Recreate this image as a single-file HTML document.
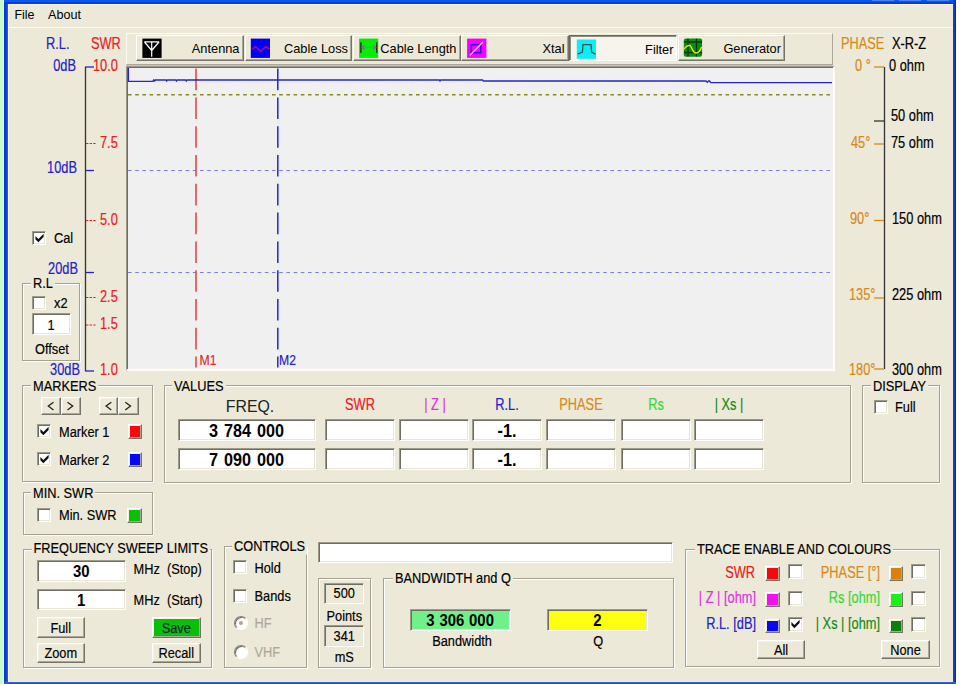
<!DOCTYPE html>
<html>
<head>
<meta charset="utf-8">
<title>Antenna Analyzer</title>
<style>
html,body{margin:0;padding:0;}
body{width:961px;height:684px;overflow:hidden;background:#ece9d8;position:relative;
 font-family:"Liberation Sans",sans-serif;font-size:12.8px;color:#000;}
.a{position:absolute;white-space:nowrap;line-height:14px;}
.t{position:absolute;white-space:nowrap;line-height:14px;height:14px;transform:scaleY(1.14);transform-origin:0 50%;-webkit-text-stroke:0.15px;}
.t.x{transform:scaleY(1.22);}
.t.gt{transform:scaleY(1.1);}
.r{text-align:right;}
.c{text-align:center;}
.blue{color:#2222c8;}
.red{color:#e82020;}
.org{color:#d88a18;}
.mag{color:#e030e0;}
.lgr{color:#38d838;}
.dgr{color:#168a16;}
.gry{color:#aca899;}
/* group box */
.gb{position:absolute;border:1px solid #a5a294;box-shadow:1px 1px 0 #fff, inset 1px 1px 0 #fff;box-sizing:border-box;}
.gt{position:absolute;background:#ece9d8;padding:0 2px;line-height:14px;height:14px;white-space:nowrap;}
/* sunken input */
.in{position:absolute;box-sizing:border-box;background:#fff;border:1px solid;border-color:#9d9a8c #fff #fff #9d9a8c;
 box-shadow:inset 1px 1px 0 #6f6d62, inset -1px -1px 0 #e8e5d6;text-align:center;font-weight:bold;white-space:nowrap;}
/* button */
.bt{position:absolute;box-sizing:border-box;background:#ece9d8;border:1px solid;border-color:#fff #75736a #75736a #fff;
 box-shadow:inset -1px -1px 0 #aaa798, inset 1px 1px 0 #f4f2e8;text-align:center;white-space:nowrap;}
/* checkbox */
.cb{position:absolute;box-sizing:border-box;width:14px;height:14px;background:#fff;border:1px solid;border-color:#9d9a8c #fff #fff #9d9a8c;
 box-shadow:inset 1px 1px 0 #6f6d62, inset -1px -1px 0 #e8e5d6;}
.sq{position:absolute;box-sizing:border-box;width:14.5px;height:14.5px;border:1px solid;border-color:#fff #75736a #75736a #fff;
 box-shadow:inset -1px -1px 0 #aaa798, inset 1px 1px 0 #f1efe2;}
.tb{position:absolute;top:35px;width:107.5px;height:26px;box-sizing:border-box;background:#ece9d8;border:1px solid;border-color:#fff #75736a #75736a #fff;
 box-shadow:inset -1px -1px 0 #aaa798;font-size:12.8px;line-height:26.4px;text-align:right;padding-right:3px;white-space:nowrap;}
.tb.dn{border-color:#6a685e #fff #fff #6a685e;box-shadow:inset 1px 1px 0 #8f8d7f;background:#f6f4ec;padding-right:2px;line-height:28.4px;}
.bv{font-size:16.2px;line-height:20px;word-spacing:1.5px;padding-top:1px;}
.bs{font-size:14.9px;line-height:19.5px;padding-top:1px;}
.bs b{display:block;transform:scaleY(1.12);transform-origin:50% 50%;}
.bv b{display:block;transform:scaleY(1.08);transform-origin:50% 50%;}
.rb{position:absolute;box-sizing:border-box;width:13.5px;height:13.5px;border-radius:50%;background:#fff;border:1px solid;border-color:#8a8878 #fff #fff #8a8878;box-shadow:inset 1px 1px 0 #6f6d62;}
.rb i{position:absolute;left:3.5px;top:3.5px;width:4.5px;height:4.5px;border-radius:50%;background:#aca899;}
.in.sm{background:#ece9d8;}
svg{position:absolute;left:0;top:0;}
svg.k{left:-1px;top:-1px;}
</style>
</head>
<body>
<!-- window frame -->
<div class="a" style="left:0;top:0;width:4px;height:684px;background:linear-gradient(90deg,#c6fbc8 0,#c8fccc 3px,#d8fff0 4px);"></div>
<div class="a" style="left:4px;top:0;width:4px;height:684px;background:linear-gradient(90deg,#0834d4 0,#0a3cdc 2px,#2462ec 4px);"></div>
<div class="a" style="left:4px;top:0;width:952px;height:4px;background:linear-gradient(180deg,#0a5cea 0,#0a56e8 1.5px,#0836dc 3px,#0a34d8 4px);"></div>
<div class="a" style="left:953px;top:0;width:3px;height:684px;background:linear-gradient(90deg,#1848d8 0,#0426b4 3px);"></div>
<div class="a" style="left:956px;top:0;width:5px;height:684px;background:#fff;"></div>
<div class="a" style="left:4px;top:682px;width:952px;height:2px;background:linear-gradient(180deg,#3c6ee0 0,#0c44d4 2px);"></div>
<div class="a" style="left:8px;top:4px;width:945px;height:1px;background:#fbfaf6;"></div>
<div class="a" style="left:8px;top:4px;width:1px;height:678px;background:#f8f7f0;"></div>
<div class="a" style="left:8px;top:27px;width:945px;height:1px;background:#fbfaf6;"></div>
<div class="a" style="left:872px;top:0;width:22px;height:1.3px;background:#4a84f4;"></div>
<div class="a" style="left:899px;top:0;width:22px;height:1.3px;background:#4a84f4;"></div>
<div class="a" style="left:927px;top:0;width:22px;height:1.3px;background:#4a84f4;"></div>
<!-- menu -->
<div class="a" style="left:14.5px;top:7.5px;font-size:12.4px;transform:scaleY(1.08);">File</div>
<div class="a" style="left:48px;top:7.5px;font-size:12.6px;transform:scaleY(1.08);">About</div>

<!-- left axis labels -->
<div class="t x blue" style="left:46px;top:37.2px;">R.L.</div>
<div class="t x red" style="left:91px;top:37.2px;">SWR</div>
<div class="t x blue r" style="left:30px;width:46px;top:59.2px;">0dB</div>
<div class="t x red" style="left:93px;top:59.2px;">10.0</div>
<div class="t x red" style="left:100px;top:136.2px;">7.5</div>
<div class="t x blue r" style="left:30px;width:47px;top:161.2px;">10dB</div>
<div class="t x red" style="left:100px;top:213.2px;">5.0</div>
<div class="t x blue r" style="left:30px;width:48px;top:262.2px;">20dB</div>
<div class="t x red" style="left:100px;top:290.2px;">2.5</div>
<div class="t x red" style="left:100px;top:317.2px;">1.5</div>
<div class="t x blue r" style="left:30px;width:50px;top:363.2px;">30dB</div>
<div class="t x red" style="left:100px;top:363.2px;">1.0</div>

<!-- right axis labels -->
<div class="t x org" style="left:841px;top:37.2px;">PHASE</div>
<div class="t x" style="left:892px;top:37.2px;">X-R-Z</div>
<div class="t x org" style="left:855px;top:59.2px;">0 °</div>
<div class="t x" style="left:889px;top:59.2px;">0 ohm</div>
<div class="t x" style="left:891px;top:109.2px;">50 ohm</div>
<div class="t x org" style="left:851px;top:136.2px;">45°</div>
<div class="t x" style="left:891px;top:136.2px;">75 ohm</div>
<div class="t x org" style="left:850px;top:212.2px;">90°</div>
<div class="t x" style="left:892px;top:212.2px;">150 ohm</div>
<div class="t x org" style="left:849px;top:288.2px;">135°</div>
<div class="t x" style="left:892px;top:288.2px;">225 ohm</div>
<div class="t x org" style="left:849px;top:363.2px;">180°</div>
<div class="t x" style="left:892px;top:363.2px;">300 ohm</div>

<!-- chart -->
<div class="a" style="left:125.5px;top:66px;width:709px;height:305px;box-sizing:border-box;background:#f0f0f0;border:solid;border-width:1px 2px 2px 1px;border-color:#9d9a8c #fdfcf8 #fdfcf8 #9d9a8c;box-shadow:inset 1px 1px 0 #6f6d62, inset -1px -1px 0 #f5f3ea;"></div>

<svg width="961" height="684" viewBox="0 0 961 684">
 <!-- left axis -->
 <line x1="85.5" y1="67" x2="85.5" y2="371" stroke="#333" stroke-width="1.3"/>
 <line x1="85" y1="67" x2="94" y2="67" stroke="#2222c8" stroke-width="1.3"/>
 <line x1="85" y1="170.5" x2="94" y2="170.5" stroke="#2222c8" stroke-width="1.3"/>
 <line x1="85" y1="272.5" x2="94" y2="272.5" stroke="#2222c8" stroke-width="1.3"/>
 <line x1="85" y1="371" x2="94" y2="371" stroke="#2222c8" stroke-width="1.3"/>
 <g stroke="#e82020" stroke-width="1.2" stroke-dasharray="2.4 1.2">
  <line x1="86" y1="143.5" x2="96" y2="143.5"/>
  <line x1="86" y1="220.5" x2="96" y2="220.5"/>
  <line x1="86" y1="297.5" x2="96" y2="297.5"/>
  <line x1="86" y1="325" x2="96" y2="325"/>
 </g>
 <!-- right axis -->
 <line x1="884.5" y1="67" x2="884.5" y2="369" stroke="#333" stroke-width="1.3"/>
 <g stroke="#d88a18" stroke-width="1.3">
  <line x1="874" y1="67" x2="884" y2="67"/>
  <line x1="874" y1="144" x2="884" y2="144"/>
  <line x1="874" y1="220.5" x2="884" y2="220.5"/>
  <line x1="874" y1="298" x2="884" y2="298"/>
  <line x1="874" y1="369" x2="884" y2="369"/>
 </g>
 <line x1="874" y1="121" x2="884" y2="121" stroke="#333" stroke-width="1.3"/>
 <!-- grid -->
 <line x1="128" y1="94.75" x2="832" y2="94.75" stroke="#8a8a1e" stroke-width="1.3" stroke-dasharray="3.6 3.6"/>
 <line x1="128" y1="170.5" x2="832" y2="170.5" stroke="#7a7ae8" stroke-width="1.2" stroke-dasharray="3.6 3.6"/>
 <line x1="128" y1="272.5" x2="832" y2="272.5" stroke="#7a7ae8" stroke-width="1.2" stroke-dasharray="3.6 3.6"/>
 <!-- markers -->
 <line x1="196" y1="68.6" x2="196" y2="367.6" stroke="#e24a4a" stroke-width="1.6" stroke-dasharray="21.6 7.2"/>
 <line x1="277.8" y1="68.6" x2="277.8" y2="367.6" stroke="#3030d8" stroke-width="1.6" stroke-dasharray="21.6 7.2"/>
 <!-- trace -->
 <polyline fill="none" stroke="#2424c4" stroke-width="1.3" points="128.4,68 128.4,81.3 153,81.3 153.6,80 154,80 154.7,81 155.4,80 166,80 166.7,81 167.4,80 175.8,80 176.5,81 177.2,80 185.6,80 186.3,81 187,80 439.3,80 440,81 440.7,80 482.5,80 483.5,81 706,81 707.3,82.3 708.6,81 709.6,81 710.8,82.6 832,82.6"/>
</svg>
<div class="t" style="left:199.5px;top:353.2px;color:#e02828;font-size:12.2px;">M1</div>
<div class="t" style="left:279px;top:353.2px;color:#2222c8;font-size:12.2px;">M2</div>

<!-- toolbar -->
<div class="a" style="left:126px;top:33px;width:707px;height:32px;box-sizing:border-box;border:1px solid;border-color:#fbfaf4 #aaa798 #aaa798 #fbfaf4;box-shadow:0 1px 0 #c8c5b4;"></div>
<div class="tb" style="left:136px;"><span>Antenna</span></div>
<div class="tb" style="left:244.5px;"><span>Cable Loss</span></div>
<div class="tb" style="left:353px;"><span>Cable Length</span></div>
<div class="tb" style="left:461px;"><span>Xtal</span></div>
<div class="tb dn" style="left:569px;"><span>Filter</span></div>
<div class="tb" style="left:677.5px;"><span>Generator</span></div>
<svg width="961" height="684" viewBox="0 0 961 684">
 <!-- antenna icon -->
 <rect x="142.4" y="38.6" width="19.2" height="19.3" fill="#000"/>
 <path d="M144.3 41.8H159.2M151.7 41.8V56.8M144.5 42L151.7 50.5L159 42" fill="none" stroke="#fff" stroke-width="1.2"/>
 <!-- cable loss icon -->
 <rect x="250.8" y="38.6" width="19.2" height="19.3" fill="#0000fa"/>
 <path d="M252 49.2L255.5 46.6L260.6 51.4L265.6 46.6L269.6 49.2" fill="none" stroke="#c80a5a" stroke-width="1.4"/>
 <!-- cable length icon -->
 <rect x="359.1" y="38.6" width="19.1" height="19.3" fill="#00f000"/>
 <path d="M360.9 42.2V53M376.7 42.2V53" stroke="#103010" stroke-width="1.3" fill="none"/>
 <path d="M363 47.4H375" stroke="#808a80" stroke-width="1.2" fill="none"/>
 <path d="M364.6 45.6L362.2 47.4L364.6 49.2M373.2 45.6L375.6 47.4L373.2 49.2" stroke="#c040c0" stroke-width="1.3" fill="none"/>
 <!-- xtal icon -->
 <rect x="467.1" y="38.6" width="19.3" height="19.3" fill="#fa00fa"/>
 <rect x="471.3" y="44.7" width="9.5" height="8" fill="none" stroke="#3010f0" stroke-width="1.6"/>
 <path d="M469.8 55.4L483 42" stroke="#ffc8ff" stroke-width="1.2"/>
 <!-- filter icon -->
 <rect x="576.8" y="39.5" width="19.2" height="19.3" fill="#08f0f4"/>
 <path d="M577.6 54.2L582.4 52L583 44.6H591L591.6 52L595.6 54.2" fill="none" stroke="#405058" stroke-width="1.3"/>
 <!-- generator icon -->
 <rect x="683.8" y="38.6" width="18.3" height="18.2" rx="2" fill="#0f8a12"/>
 <path d="M688 38.8V56.6M696.5 38.8V56.6M684 42H702M684 52.5H702" stroke="#063c08" stroke-width="1.3" fill="none"/>
 <path d="M684 49.3C685.5 46.5 687.5 45.3 690 45.3C692 47 692.5 52.8 696 53C698.8 53 700.6 50 701.6 47" fill="none" stroke="#e6f020" stroke-width="1.3"/>
</svg>

<!-- left panel -->
<div class="cb" style="left:32px;top:231px;"><svg class="k" width="14" height="14" viewBox="0 0 14 14"><path d="M3.4 5L6.4 8L11.6 2.8V6.1L6.4 11.3L3.4 8.3Z" fill="#111"/></svg></div>
<div class="t" style="left:54px;top:231px;">Cal</div>
<div class="gb" style="left:22.3px;top:283px;width:58px;height:78px;"></div>
<div class="gt t" style="left:31px;top:276.8px;">R.L</div>
<div class="cb" style="left:32px;top:296px;"></div>
<div class="t" style="left:54px;top:296px;">x2</div>
<div class="in" style="left:31.8px;top:312.8px;width:38.8px;height:22.3px;"></div>
<div class="t c" style="left:32px;top:317.5px;width:38px;">1</div>
<div class="t" style="left:35px;top:342px;">Offset</div>

<!-- markers -->
<div class="gb" style="left:22px;top:385px;width:131px;height:97px;"></div>
<div class="gt t" style="left:31px;top:379.8px;">MARKERS</div>
<div class="bt" style="left:41px;top:397px;width:19.5px;height:17.5px;"></div>
<div class="bt" style="left:60.5px;top:397px;width:20.5px;height:17.5px;"></div>
<div class="bt" style="left:99px;top:397px;width:19px;height:17.5px;"></div>
<div class="bt" style="left:118px;top:397px;width:20.7px;height:17.5px;"></div>
<div class="cb" style="left:37px;top:424px;"><svg class="k" width="14" height="14" viewBox="0 0 14 14"><path d="M3.4 5L6.4 8L11.6 2.8V6.1L6.4 11.3L3.4 8.3Z" fill="#111"/></svg></div>
<div class="t" style="left:59px;top:424.7px;">Marker 1</div>
<div class="sq" style="left:127.5px;top:424px;background:#f80808;"></div>
<div class="cb" style="left:37px;top:452px;"><svg class="k" width="14" height="14" viewBox="0 0 14 14"><path d="M3.4 5L6.4 8L11.6 2.8V6.1L6.4 11.3L3.4 8.3Z" fill="#111"/></svg></div>
<div class="t" style="left:59px;top:453px;">Marker 2</div>
<div class="sq" style="left:127.5px;top:452px;background:#0808f8;"></div>
<svg width="961" height="684" viewBox="0 0 961 684"><path d="M53.5 402.2L48.3 406.1L53.5 410M67.5 402.2L72.7 406.1L67.5 410M111.3 402.2L106.1 406.1L111.3 410M125.3 402.2L130.5 406.1L125.3 410" fill="none" stroke="#222" stroke-width="1.3"/></svg>
<!-- values -->
<div class="gb" style="left:164px;top:385px;width:687px;height:98px;"></div>
<div class="gt t" style="left:172px;top:379.8px;">VALUES</div>
<div class="a c" style="left:181px;top:398.5px;width:138px;font-size:15.9px;line-height:16px;color:#222;">FREQ.</div>
<div class="t x red c" style="left:325px;width:70px;top:398.4px;">SWR</div>
<div class="t x mag c" style="left:400px;width:70px;top:398.4px;">| Z |</div>
<div class="t x blue c" style="left:472px;width:70px;top:398.4px;">R.L.</div>
<div class="t x org c" style="left:546px;width:70px;top:398.4px;">PHASE</div>
<div class="t x lgr c" style="left:621px;width:70px;top:398.4px;">Rs</div>
<div class="t x dgr c" style="left:694px;width:70px;top:398.4px;">| Xs |</div>
<div class="in bv" style="left:177.5px;top:419px;width:138px;height:21.5px;"><b>3 784 000</b></div>
<div class="in bv" style="left:177.5px;top:448px;width:138px;height:22px;"><b>7 090 000</b></div>
<div class="in" style="left:325px;top:419px;width:70px;height:21.5px;"></div>
<div class="in" style="left:399px;top:419px;width:70px;height:21.5px;"></div>
<div class="in bv" style="left:472px;top:419px;width:70px;height:21.5px;"><b>-1.</b></div>
<div class="in" style="left:546px;top:419px;width:70px;height:21.5px;"></div>
<div class="in" style="left:620.5px;top:419px;width:70px;height:21.5px;"></div>
<div class="in" style="left:694px;top:419px;width:70px;height:21.5px;"></div>
<div class="in" style="left:325px;top:448px;width:70px;height:22px;"></div>
<div class="in" style="left:399px;top:448px;width:70px;height:22px;"></div>
<div class="in bv" style="left:472px;top:448px;width:70px;height:22px;"><b>-1.</b></div>
<div class="in" style="left:546px;top:448px;width:70px;height:22px;"></div>
<div class="in" style="left:620.5px;top:448px;width:70px;height:22px;"></div>
<div class="in" style="left:694px;top:448px;width:70px;height:22px;"></div>
<!-- display -->
<div class="gb" style="left:862px;top:385px;width:78px;height:98px;"></div>
<div class="gt t" style="left:871px;top:379.8px;">DISPLAY</div>
<div class="cb" style="left:873.5px;top:400px;"></div>
<div class="t" style="left:895px;top:400px;">Full</div>
<!-- min swr -->
<div class="gb" style="left:22.5px;top:491.5px;width:130.5px;height:43.5px;"></div>
<div class="gt t" style="left:31px;top:486.8px;">MIN. SWR</div>
<div class="cb" style="left:37px;top:508px;"></div>
<div class="t" style="left:59px;top:508px;">Min. SWR</div>
<div class="sq" style="left:127px;top:508px;background:#08c008;"></div>

<!-- frequency sweep limits -->
<div class="gb" style="left:22.5px;top:548.5px;width:189.5px;height:119px;"></div>
<div class="gt t" style="left:31.5px;top:542.3px;">FREQUENCY SWEEP LIMITS</div>
<div class="in bs" style="left:36.5px;top:560px;width:89.5px;height:21.5px;"><b>30</b></div>
<div class="t" style="left:133.5px;top:561.5px;">MHz</div><div class="t" style="left:167px;top:561.5px;">(Stop)</div>
<div class="in bs" style="left:36.5px;top:588.5px;width:89.5px;height:21.7px;"><b>1</b></div>
<div class="t" style="left:133.5px;top:592.5px;">MHz</div><div class="t" style="left:167px;top:592.5px;">(Start)</div>
<div class="bt" style="left:36.5px;top:617px;width:48.5px;height:20.5px;"></div><div class="t c" style="left:36.5px;width:48.5px;top:620.8px;">Full</div>
<div class="bt" style="left:152px;top:617px;width:48.5px;height:20.5px;background:#08c008;"></div><div class="t c" style="left:152px;width:48.5px;top:620.8px;color:#123;">Save</div>
<div class="bt" style="left:36.5px;top:642.5px;width:48.5px;height:20px;"></div><div class="t c" style="left:36.5px;width:48.5px;top:646px;">Zoom</div>
<div class="bt" style="left:152px;top:642.5px;width:48.5px;height:20px;"></div><div class="t c" style="left:152px;width:48.5px;top:646px;">Recall</div>
<!-- controls -->
<div class="gb" style="left:223.5px;top:545.5px;width:83.5px;height:122.5px;"></div>
<div class="gt t" style="left:232px;top:539.6px;">CONTROLS</div>
<div class="cb" style="left:233px;top:560px;"></div>
<div class="t" style="left:254.5px;top:560.5px;">Hold</div>
<div class="cb" style="left:233px;top:589px;"></div>
<div class="t" style="left:254.5px;top:589.3px;">Bands</div>
<div class="rb" style="left:234px;top:616px;"><i></i></div>
<div class="t gry" style="left:254.5px;top:616px;">HF</div>
<div class="rb" style="left:234px;top:645px;"></div>
<div class="t gry" style="left:254.5px;top:645px;">VHF</div>
<!-- status box -->
<div class="in" style="left:318px;top:542px;width:355px;height:21px;"></div>
<!-- points -->
<div class="gb" style="left:318px;top:577.5px;width:53px;height:90.5px;"></div>
<div class="in sm" style="left:324.3px;top:583px;width:40px;height:20.5px;"></div><div class="t c" style="left:324.3px;width:40px;top:585.5px;">500</div>
<div class="t c" style="left:324.3px;width:40px;top:608.8px;">Points</div>
<div class="in sm" style="left:324.3px;top:625px;width:40px;height:21.5px;"></div><div class="t c" style="left:324.3px;width:40px;top:629px;">341</div>
<div class="t c" style="left:324.3px;width:40px;top:649.5px;">mS</div>
<!-- bandwidth and q -->
<div class="gb" style="left:383.3px;top:578px;width:290.7px;height:89.5px;"></div>
<div class="gt t" style="left:393px;top:572.3px;">BANDWIDTH and Q</div>
<div class="in bs" style="left:409.6px;top:609.3px;width:101px;height:21.3px;background:#70f088;word-spacing:0.7px;"><b>3 306 000</b></div>
<div class="t c" style="left:411.6px;width:101px;top:634.3px;">Bandwidth</div>
<div class="in bs" style="left:547px;top:609.3px;width:100.7px;height:21.3px;background:#ffff10;"><b>2</b></div>
<div class="t c" style="left:548px;width:100.7px;top:634.3px;">Q</div>
<!-- trace enable -->
<div class="gb" style="left:685px;top:548.5px;width:254.5px;height:118.5px;"></div>
<div class="gt t" style="left:695px;top:543.3px;">TRACE ENABLE AND COLOURS</div>
<div class="t x red r" style="left:655px;width:100px;top:566px;">SWR</div>
<div class="sq" style="left:765px;top:566px;background:#f80808;"></div>
<div class="cb" style="left:787.5px;top:564px;width:15px;height:15px;"></div>
<div class="t x org r" style="left:780px;width:100px;top:566px;">PHASE [°]</div>
<div class="sq" style="left:888.5px;top:566px;background:#d8820a;"></div>
<div class="cb" style="left:911px;top:564px;width:15px;height:15px;"></div>
<div class="t x mag r" style="left:655px;width:101px;top:591px;">| Z | [ohm]</div>
<div class="sq" style="left:765px;top:592px;background:#f010f0;"></div>
<div class="cb" style="left:787.5px;top:590.5px;width:15px;height:15px;"></div>
<div class="t x lgr r" style="left:780px;width:100px;top:591px;">Rs [ohm]</div>
<div class="sq" style="left:888.5px;top:592px;background:#18f018;"></div>
<div class="cb" style="left:911px;top:590.5px;width:15px;height:15px;"></div>
<div class="t x blue r" style="left:655px;width:101px;top:616.5px;">R.L. [dB]</div>
<div class="sq" style="left:765px;top:618.5px;background:#0808f8;"></div>
<div class="cb" style="left:787.5px;top:616.5px;width:15px;height:15px;"><svg class="k" width="14" height="14" viewBox="0 0 14 14"><path d="M3.4 5L6.4 8L11.6 2.8V6.1L6.4 11.3L3.4 8.3Z" fill="#111"/></svg></div>
<div class="t x dgr r" style="left:780px;width:100px;top:616.5px;">| Xs | [ohm]</div>
<div class="sq" style="left:888.5px;top:618.5px;background:#0a800a;"></div>
<div class="cb" style="left:911px;top:616.5px;width:15px;height:15px;"></div>
<div class="bt" style="left:757px;top:640.2px;width:48px;height:19px;"></div><div class="t c" style="left:757px;width:48px;top:642.5px;">All</div>
<div class="bt" style="left:881px;top:640.2px;width:48.5px;height:19px;"></div><div class="t c" style="left:881.5px;width:48px;top:642.5px;">None</div>

</body>
</html>
